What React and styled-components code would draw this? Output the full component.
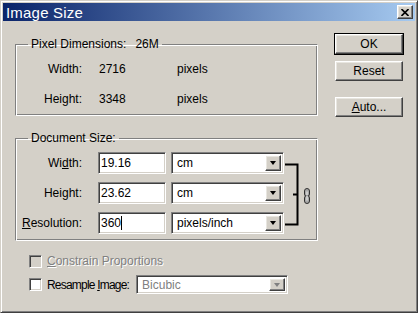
import React from "react";
import styled, { createGlobalStyle } from "styled-components";

const GlobalStyle = createGlobalStyle`
  html, body {
    margin: 0;
    padding: 0;
    background: #d4d0c8;
  }
  body {
    font-family: "Liberation Sans", Arial, sans-serif;
    font-size: 12px;
    color: #000;
  }
`;

const sunken = `
  border: 1px solid;
  border-color: #808080 #ffffff #ffffff #808080;
  box-shadow: inset 1px 1px #404040, inset -1px -1px #d4d0c8;
`;

const raised = `
  border: 1px solid;
  border-color: #ffffff #404040 #404040 #ffffff;
  box-shadow: inset -1px -1px #808080, inset 1px 1px #e8e6e0;
`;

const Window = styled.div`
  width: 418px;
  height: 313px;
  box-sizing: border-box;
  background: #d4d0c8;
  border: 1px solid;
  border-color: #d4d0c8 #404040 #404040 #d4d0c8;
  box-shadow: inset 1px 1px #ffffff, inset -1px -1px #808080;
  padding: 2px;
  display: flex;
  flex-direction: column;
`;

const TitleBar = styled.div`
  height: 18px;
  display: flex;
  align-items: center;
  justify-content: space-between;
  padding: 0 2px 0 3px;
  background: linear-gradient(to right, #0a246a, #a6caf0);
  color: #fff;
  font-size: 15px;
  letter-spacing: 0.2px;
`;

const CloseButton = styled.div`
  ${raised}
  width: 16px;
  height: 14px;
  box-sizing: border-box;
  background: #d4d0c8;
  display: flex;
  align-items: center;
  justify-content: center;
`;

const Body = styled.div`
  flex: 1;
  display: flex;
  gap: 17px;
  padding: 13px 0 0 12px;
`;

const LeftColumn = styled.div`
  width: 303px;
  padding-top: 3px;
  display: flex;
  flex-direction: column;
`;

const Group = styled.fieldset`
  margin: 0 0 ${(p) => p.$gap || 0}px;
  padding: ${(p) => p.$pad};
  border: 1px solid;
  border-color: #808080 #ffffff #ffffff #808080;
  box-shadow: inset 1px 1px #ffffff, inset -1px -1px #808080;
  min-width: 0;
`;

const Legend = styled.legend`
  padding: 0 3px;
  margin-left: 10px;
  line-height: 14px;
  white-space: nowrap;
`;

const LegendValue = styled.span`
  margin-left: 9px;
`;

const PixelGrid = styled.div`
  display: grid;
  grid-template-columns: 64px 61px 1fr;
  column-gap: 17px;
  row-gap: 16px;
  line-height: 14px;
`;

const Label = styled.div`
  text-align: right;
  white-space: nowrap;
`;

const DocGrid = styled.div`
  display: grid;
  grid-template-columns: 80px 73px 113px 1fr;
  grid-auto-rows: 22px;
  row-gap: 8px;
  align-items: center;
`;

const DocLabel = styled(Label)`
  padding-right: 16px;
`;

const Input = styled.div`
  ${sunken}
  width: 68px;
  height: 22px;
  box-sizing: border-box;
  background: #fff;
  padding: 3px 2px 0;
  line-height: 14px;
`;

const Caret = styled.span`
  border-right: 1px solid #000;
`;

const Select = styled.div`
  ${sunken}
  width: ${(p) => p.$width}px;
  height: ${(p) => p.$height || 22}px;
  box-sizing: border-box;
  background: #fff;
  display: flex;
  align-items: center;
  padding: 2px;
  color: ${(p) => (p.$disabled ? "#808080" : "#000")};
`;

const SelectText = styled.div`
  flex: 1;
  padding-left: 3px;
  line-height: 14px;
`;

const DropButton = styled.div`
  ${raised}
  width: 16px;
  height: 100%;
  box-sizing: border-box;
  background: #d4d0c8;
  display: flex;
  align-items: center;
  justify-content: center;
`;

const Arrow = styled.div`
  width: 0;
  height: 0;
  border-left: 3.5px solid transparent;
  border-right: 3.5px solid transparent;
  border-top: 4px solid ${(p) => (p.$disabled ? "#808080" : "#000")};
`;

const LinkCell = styled.div`
  grid-column: 4;
  grid-row: 1 / 4;
  align-self: stretch;
`;

const CheckRow = styled.div`
  display: flex;
  align-items: center;
  gap: 5px;
  padding-left: 14px;
  margin-top: ${(p) => p.$top}px;
  height: ${(p) => p.$height}px;
  color: ${(p) => (p.$disabled ? "#808080" : "#000")};
  text-shadow: ${(p) => (p.$disabled ? "1px 1px #ffffff" : "none")};
`;

const CheckBox = styled.div`
  ${sunken}
  width: 13px;
  height: 13px;
  box-sizing: border-box;
  background: ${(p) => (p.$disabled ? "#d4d0c8" : "#fff")};
`;

const CheckLabel = styled.span`
  margin-right: 2px;
  letter-spacing: -0.8px;
  white-space: nowrap;
`;

const RightColumn = styled.div`
  width: 68px;
  display: flex;
  flex-direction: column;
`;

const Button = styled.div`
  ${raised}
  height: 20px;
  box-sizing: border-box;
  background: #d4d0c8;
  display: flex;
  align-items: center;
  justify-content: center;
  margin-bottom: ${(p) => p.$gap || 0}px;
  outline: ${(p) => (p.$default ? "1px solid #000" : "none")};
  outline-offset: 0;
`;

const U = styled.u`
  text-decoration: underline;
  text-underline-offset: 1px;
`;

function Dropdown({ width, height, value, disabled }) {
  return (
    <Select $width={width} $height={height} $disabled={disabled}>
      <SelectText>{value}</SelectText>
      <DropButton>
        <Arrow $disabled={disabled} />
      </DropButton>
    </Select>
  );
}

function LinkBracket() {
  return (
    <svg width="30" height="82" viewBox="0 0 30 82">
      <path
        d="M1 12.5 H14 M9 42.5 H14 M1 72.5 H14 M13.5 11.5 V73.5"
        stroke="#000"
        strokeWidth="2"
        fill="none"
      />
      <rect x="20.5" y="36.5" width="5" height="8" rx="2.5" fill="#a8a8a8" stroke="#303030" />
      <rect x="20.5" y="43.5" width="5" height="8" rx="2.5" fill="#a8a8a8" stroke="#303030" />
      <path d="M23 39.5 V48.5" stroke="#f0f0f0" strokeWidth="1" />
    </svg>
  );
}

function CloseGlyph() {
  return (
    <svg width="8" height="7" viewBox="0 0 8 7">
      <path d="M0.5 0 L7.5 7 M7.5 0 L0.5 7" stroke="#000" strokeWidth="1.6" />
    </svg>
  );
}

export default function App() {
  return (
    <>
      <GlobalStyle />
      <Window>
        <TitleBar>
          <span>Image Size</span>
          <CloseButton>
            <CloseGlyph />
          </CloseButton>
        </TitleBar>
        <Body>
          <LeftColumn>
            <Group $pad="11px 2px 9px" $gap={15}>
              <Legend>
                Pixel Dimensions:<LegendValue>26M</LegendValue>
              </Legend>
              <PixelGrid>
                <Label>Width:</Label>
                <div>2716</div>
                <div>pixels</div>
                <Label>Height:</Label>
                <div>3348</div>
                <div>pixels</div>
              </PixelGrid>
            </Group>

            <Group $pad="7px 2px 6px">
              <Legend>Document Size:</Legend>
              <DocGrid>
                <DocLabel>
                  Wi<U>d</U>th:
                </DocLabel>
                <Input>19.16</Input>
                <Dropdown width={113} value="cm" />
                <LinkCell>
                  <LinkBracket />
                </LinkCell>

                <DocLabel>
                  Hei<U>g</U>ht:
                </DocLabel>
                <Input>23.62</Input>
                <Dropdown width={113} value="cm" />

                <DocLabel>
                  <U>R</U>esolution:
                </DocLabel>
                <Input>
                  <Caret>360</Caret>
                </Input>
                <Dropdown width={113} value="pixels/inch" />
              </DocGrid>
            </Group>

            <CheckRow $top={13} $height={14} $disabled>
              <CheckBox $disabled />
              <span>
                <U>C</U>onstrain Proportions
              </span>
            </CheckRow>
            <CheckRow $top={7} $height={19}>
              <CheckBox />
              <CheckLabel>
                Resample <U>I</U>mage:
              </CheckLabel>
              <Dropdown width={152} height={19} value="Bicubic" disabled />
            </CheckRow>
          </LeftColumn>

          <RightColumn>
            <Button $default $gap={7}>OK</Button>
            <Button $gap={16}>Reset</Button>
            <Button>
              <span>
                <U>A</U>uto...
              </span>
            </Button>
          </RightColumn>
        </Body>
      </Window>
    </>
  );
}
